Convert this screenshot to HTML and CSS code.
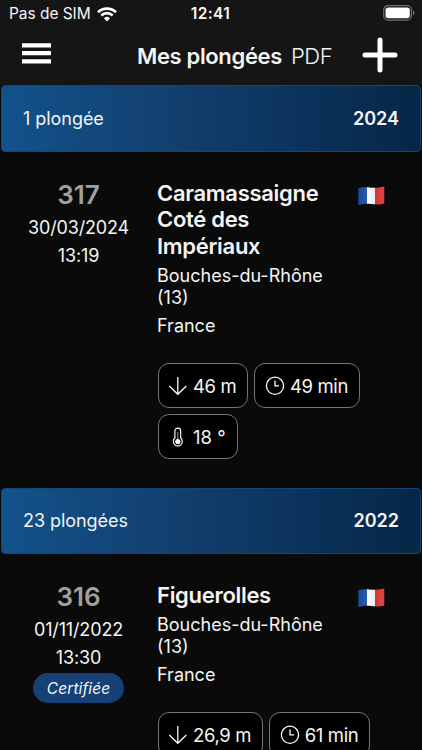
FILE: index.html
```html
<!DOCTYPE html>
<html lang="fr">
<head>
<meta charset="utf-8">
<title>Mes plongées</title>
<link rel="stylesheet" href="styles.css">
</head>
<body>
<svg class="defs" aria-hidden="true">
  <defs>
    <linearGradient id="fold" x1="0" x2="1" y1="0" y2="0">
      <stop offset="0" stop-color="#000" stop-opacity="0.1"/>
      <stop offset="0.4" stop-color="#fff" stop-opacity="0.1"/>
      <stop offset="0.66" stop-color="#000" stop-opacity="0.06"/>
      <stop offset="0.9" stop-color="#fff" stop-opacity="0.06"/>
      <stop offset="1" stop-color="#000" stop-opacity="0.1"/>
    </linearGradient>
    <clipPath id="wave"><path d="M0.3 2.2C4.5 0.9 8.5 1.4 13 1.7S21 1.4 26.300 0.500V17.400C21.500 18.800 17.500 18.500 13 18S5 18 0.300 19Z"/></clipPath>
    <symbol id="flag" viewBox="0 0 27 20"><g clip-path="url(#wave)">
      <path fill="#1a50a8" d="M0 0h9v20H0z"/><path fill="#fafafa" d="M9 0h8v20H9z"/><path fill="#e03a36" d="M17 0h10v20H17z"/><path fill="url(#fold)" d="M0 0h27v20H0z"/></g></symbol>
    <symbol id="down" viewBox="0 0 20 20"><path d="M9.800 1v17.300M1.300 10l8.500 8.300 8.500-8.300" fill="none" stroke="#fff" stroke-width="1.250"/></symbol>
    <symbol id="clock" viewBox="0 0 20 20"><circle cx="10" cy="9.800" r="8.600" fill="none" stroke="#fff" stroke-width="1.300"/><path d="M10 4.500v5.400h4" fill="none" stroke="#fff" stroke-width="1.300"/></symbol>
    <symbol id="thermo" viewBox="0 0 20 20"><path d="M6.900 11V4a2.900 2.900 0 0 1 5.800 0v7a4.500 4.500 0 1 1-5.800 0Z" fill="none" stroke="#fff" stroke-width="1.150"/><path d="M9.800 5v7" stroke="#999" stroke-width="1"/><circle cx="9.800" cy="14.500" r="2.600" fill="#fff"/></symbol>
  </defs>
</svg>
<header class="top">
  <div class="status">
    <div class="carrier"><span>Pas de SIM</span>
      <svg width="20" height="15" viewBox="0 0 20 15"><g fill="none" stroke="#fff" stroke-width="2.700"><path d="M1 5.200a12.900 12.900 0 0 1 18 0"/><path d="M4.300 8.500a8.200 8.200 0 0 1 11.400 0"/></g><path fill="#fff" d="M7 11.300a4.300 4.300 0 0 1 6 0l-3 3.200Z"/></svg>
    </div>
    <span class="clock">12:41</span>
    <svg class="battery" width="32" height="16" viewBox="0 0 32 16"><rect x=".7" y=".7" width="27.800" height="14.400" rx="4.400" fill="none" stroke="#707070" stroke-width="1.200"/><rect x="2.500" y="2.500" width="24.300" height="10.800" rx="2.700" fill="#fff"/><path d="M30 5.300q3 2.600 0 5.200Z" fill="#707070"/></svg>
  </div>
  <nav class="nav">
    <svg class="menu" width="29" height="21" viewBox="0 0 29 21"><path d="M0 2.300h29M0 10.200h29M0 18.300h29" stroke="#fff" stroke-width="4.200"/></svg>
    <h1>Mes plongées</h1><span class="pdf">PDF</span>
    <svg class="plus" width="36" height="36" viewBox="0 0 36 36"><path d="M18 3v30M3 18h30" stroke="#fff" stroke-width="5" stroke-linecap="round"/></svg>
  </nav>
</header>
<main>
  <div class="year"><span class="count">1 plongée</span><strong>2024</strong></div>
  <article class="dive">
    <div class="when"><div class="number">317</div><div>30/03/2024</div><div class="time">13:19</div></div>
    <div class="info">
      <div class="place"><div class="names"><h2>Caramassaigne Coté des Impériaux</h2><p>Bouches-du-Rhône (13)</p><p class="country">France</p></div>
      <svg class="flag"><use href="#flag"/></svg></div>
      <div class="stats">
        <span class="stat depth"><svg><use href="#down"/></svg><span>46 m</span></span>
        <span class="stat duration"><svg><use href="#clock"/></svg><span>49 min</span></span>
        <span class="stat temp"><svg><use href="#thermo"/></svg><span>18 °</span></span>
      </div>
    </div>
  </article>
  <div class="year"><span class="count">23 plongées</span><strong>2022</strong></div>
  <article class="dive">
    <div class="when"><div class="number">316</div><div>01/11/2022</div><div class="time">13:30</div><span class="badge">Certifiée</span></div>
    <div class="info">
      <div class="place"><div class="names"><h2>Figuerolles</h2><p>Bouches-du-Rhône (13)</p><p class="country">France</p></div>
      <svg class="flag"><use href="#flag"/></svg></div>
      <div class="stats">
        <span class="stat"><svg><use href="#down"/></svg><span>26,9 m</span></span>
        <span class="stat"><svg><use href="#clock"/></svg><span>61 min</span></span>
      </div>
    </div>
  </article>
</main>
</body>
</html>
```
FILE: styles.css
```css
* { box-sizing: border-box; }
html, body { margin: 0; height: 750px; overflow: hidden; background: #0a0a0a; }
body { font-family: Inter, "Liberation Sans", sans-serif; font-size: 18px; line-height: 22px; color: #f4f4f4; }
h1, h2, p { margin: 0; }
svg { display: block; flex: none; }
.defs { position: absolute; width: 0; height: 0; }

.top { height: 85px; background: #151515; }
.status { display: grid; grid-template-columns: 1fr auto 1fr; align-items: center; height: 28px; padding: 0 8px 0 9px; font-size: 15.5px; }
.carrier { display: flex; align-items: center; gap: 6px; letter-spacing: -0.05px; }
.clock { margin-right: 2px; font-weight: 600; letter-spacing: 0.4px; }
.battery { justify-self: end; margin: -2px -1px 0 0; }
.nav { display: flex; align-items: center; height: 56px; padding: 0 24px 0 22px; }
.menu { margin: -5px 86px 0 0; }
.nav h1 { font-size: 22px; line-height: 28px; font-weight: 600; letter-spacing: -0.35px; white-space: nowrap; }
.pdf { margin-left: 9px; font-size: 22px; font-weight: 350; letter-spacing: -0.4px; }
.plus { margin: -2px 0 0 auto; }

.year { display: flex; align-items: center; justify-content: space-between; height: 66.5px; margin: 0 1px; padding: 1px 21px 0; border: 1px solid #174477; border-radius: 4px; background: linear-gradient(90deg, #12528b, #123f6e 42%, #0b315a 75%, #062746); }
.count { letter-spacing: -0.05px; }
.year strong { font-size: 18px; font-weight: 600; }

.dive { display: grid; grid-template-columns: 157px 1fr; height: 336px; padding-top: 28px; }
.when { text-align: center; line-height: 28px; letter-spacing: -0.15px; }
.number { margin-bottom: 4px; font-size: 26px; line-height: 30px; font-weight: 600; letter-spacing: 0; color: #a0a0a0; }
.badge { display: block; width: 91px; height: 30px; margin: 1px auto 0; border-radius: 15px; background: #164177; font-size: 15.5px; line-height: 31px; font-style: italic; letter-spacing: 0.1px; }
.place { display: flex; }
.names { width: 175px; }
h2 { margin-bottom: 5.3px; font-size: 22px; line-height: 26.7px; font-weight: 600; letter-spacing: -0.3px; }
.country { margin-top: 5.7px; }
.flag { width: 27px; height: 20px; margin: 6px 0 0 26px; }
.stats { display: flex; flex-wrap: wrap; gap: 6px; width: 220px; margin: 26.5px 0 0 0.5px; }
.stat { display: flex; align-items: center; gap: 5px; height: 45px; padding: 0 11px 0 9.5px; border: 1px solid #767676; border-radius: 11px; background: #000; font-size: 18.5px; letter-spacing: -0.35px; white-space: nowrap; }
.temp { letter-spacing: 0; }
.stat svg { width: 20px; height: 20px; }
```
